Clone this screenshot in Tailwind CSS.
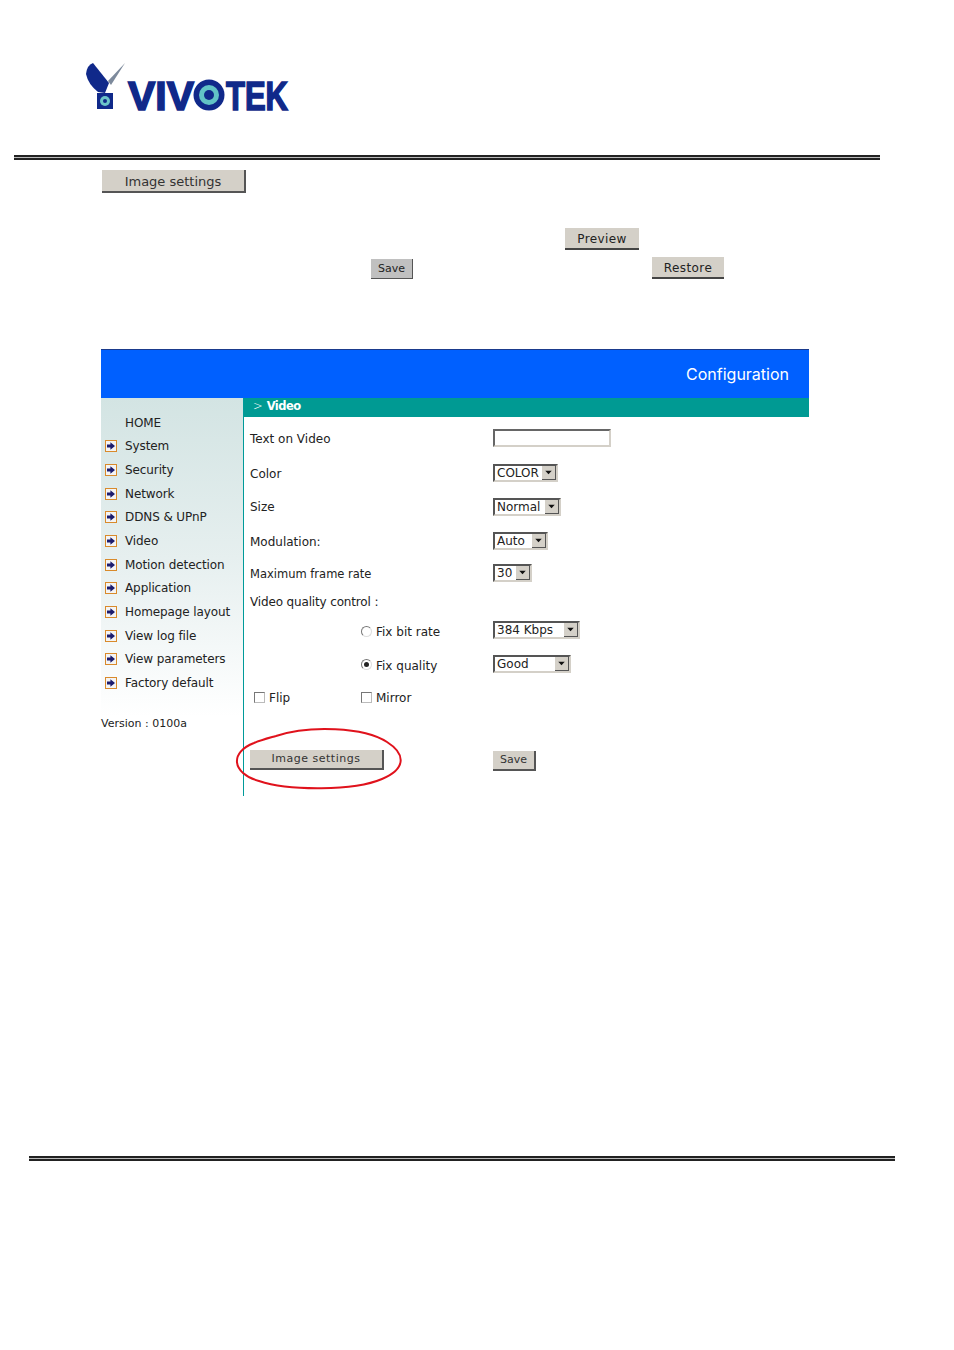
<!DOCTYPE html>
<html lang="en">
<head>
<meta charset="UTF-8">
<title>Image settings</title>
<script src="https://cdn.jsdelivr.net/npm/@tailwindcss/browser@4"></script>
</head>
<body class="bg-white w-[954px] h-[1350px] overflow-hidden font-['DejaVu_Sans',sans-serif] text-[12px] text-[#222]">

<!-- logo -->
<div class="h-[155px] pt-[62px] pl-[85px]">
  <svg width="230" height="62" viewBox="0 0 230 62">
    <path d="M1 12 Q2 3 8 1 L24 21 L20 31 L13 30 Q3 22 1 12Z" fill="#10298a"/>
    <path d="M23 19 L40 1 L26 23 Z" fill="#7d8a9c"/>
    <rect x="12" y="31" width="16" height="16" fill="#10298a"/>
    <circle cx="20" cy="39" r="5" fill="#6cc4c8"/>
    <circle cx="20" cy="39" r="2" fill="#10298a"/>
    <g font-family="Liberation Sans" font-weight="700" font-size="40" fill="#10298a" stroke="#10298a" stroke-width="1.6">
      <text x="43" y="47.5" textLength="66" lengthAdjust="spacingAndGlyphs">VIV</text>
      <text x="141" y="47.5" textLength="62" lengthAdjust="spacingAndGlyphs">TEK</text>
    </g>
    <circle cx="124" cy="33" r="15.5" fill="#10298a"/>
    <circle cx="124" cy="33" r="10" fill="#62c3c6"/>
    <circle cx="124" cy="33" r="5" fill="#10298a"/>
  </svg>
</div>

<!-- top rule -->
<div class="ml-[14px] w-[866px] h-[5px] border-y-2 border-[#222] bg-[#bbb]"></div>

<!-- buttons described in the manual text -->
<div class="pl-[102px] pt-[10px]">
  <button class="block w-[144px] h-[23px] pt-[2px] bg-[#d4d0c8] border-r-2 border-b-2 border-[#555] text-[13px] text-[#333]">Image settings</button>
</div>
<div class="pl-[565px] pt-[35px]">
  <button class="block w-[74px] h-[22px] pt-[2px] bg-[#d4d0c8] border-b-2 border-[#444] text-[12px] tracking-[.4px] text-[#222]">Preview</button>
</div>
<div class="flex items-end pl-[371px] pt-[7px] h-[29px]">
  <button class="w-[42px] h-[20px] pt-[2px] bg-[#c0c0c0] border-b border-r border-[#555] text-[11px] text-[#222]">Save</button>
  <button class="ml-[239px] w-[72px] h-[22px] pt-[2px] bg-[#d4d0c8] border-b-2 border-[#444] text-[12px] tracking-[.4px] text-[#222]">Restore</button>
</div>

<!-- configuration screenshot -->
<div class="relative ml-[101px] mt-[70px] w-[708px] h-[447px]">
  <div class="h-[49px] bg-[#0060ff] border-t border-[#1a3a8c] flex items-center justify-end pr-[20px] text-white font-['Inter',sans-serif] text-[16px]">Configuration</div>
  <div class="flex h-[398px]">
    <!-- side menu -->
    <div class="w-[142px] bg-linear-to-b from-[#d3e4e3] via-[#e6efef] via-40% to-white to-80% pt-[12.5px] text-[12px] tracking-[-.1px]">
      <div class="h-[24px] pl-[24px] flex items-center">HOME</div>
      <ul>
        <li class="h-[23.67px] flex items-center gap-[8px] pl-[4px]"><svg width="12" height="12" viewBox="0 0 12 12"><rect x=".5" y=".5" width="11" height="11" fill="#f4f4f4" stroke="#d98a2b"/><path d="M2 4.6h3.4V2.2L10 6l-4.6 3.8V7.4H2z" fill="#1c1c6e"/></svg>System</li>
        <li class="h-[23.67px] flex items-center gap-[8px] pl-[4px]"><svg width="12" height="12" viewBox="0 0 12 12"><rect x=".5" y=".5" width="11" height="11" fill="#f4f4f4" stroke="#d98a2b"/><path d="M2 4.6h3.4V2.2L10 6l-4.6 3.8V7.4H2z" fill="#1c1c6e"/></svg>Security</li>
        <li class="h-[23.67px] flex items-center gap-[8px] pl-[4px]"><svg width="12" height="12" viewBox="0 0 12 12"><rect x=".5" y=".5" width="11" height="11" fill="#f4f4f4" stroke="#d98a2b"/><path d="M2 4.6h3.4V2.2L10 6l-4.6 3.8V7.4H2z" fill="#1c1c6e"/></svg>Network</li>
        <li class="h-[23.67px] flex items-center gap-[8px] pl-[4px]"><svg width="12" height="12" viewBox="0 0 12 12"><rect x=".5" y=".5" width="11" height="11" fill="#f4f4f4" stroke="#d98a2b"/><path d="M2 4.6h3.4V2.2L10 6l-4.6 3.8V7.4H2z" fill="#1c1c6e"/></svg>DDNS &amp; UPnP</li>
        <li class="h-[23.67px] flex items-center gap-[8px] pl-[4px]"><svg width="12" height="12" viewBox="0 0 12 12"><rect x=".5" y=".5" width="11" height="11" fill="#f4f4f4" stroke="#d98a2b"/><path d="M2 4.6h3.4V2.2L10 6l-4.6 3.8V7.4H2z" fill="#1c1c6e"/></svg>Video</li>
        <li class="h-[23.67px] flex items-center gap-[8px] pl-[4px]"><svg width="12" height="12" viewBox="0 0 12 12"><rect x=".5" y=".5" width="11" height="11" fill="#f4f4f4" stroke="#d98a2b"/><path d="M2 4.6h3.4V2.2L10 6l-4.6 3.8V7.4H2z" fill="#1c1c6e"/></svg>Motion detection</li>
        <li class="h-[23.67px] flex items-center gap-[8px] pl-[4px]"><svg width="12" height="12" viewBox="0 0 12 12"><rect x=".5" y=".5" width="11" height="11" fill="#f4f4f4" stroke="#d98a2b"/><path d="M2 4.6h3.4V2.2L10 6l-4.6 3.8V7.4H2z" fill="#1c1c6e"/></svg>Application</li>
        <li class="h-[23.67px] flex items-center gap-[8px] pl-[4px]"><svg width="12" height="12" viewBox="0 0 12 12"><rect x=".5" y=".5" width="11" height="11" fill="#f4f4f4" stroke="#d98a2b"/><path d="M2 4.6h3.4V2.2L10 6l-4.6 3.8V7.4H2z" fill="#1c1c6e"/></svg>Homepage layout</li>
        <li class="h-[23.67px] flex items-center gap-[8px] pl-[4px]"><svg width="12" height="12" viewBox="0 0 12 12"><rect x=".5" y=".5" width="11" height="11" fill="#f4f4f4" stroke="#d98a2b"/><path d="M2 4.6h3.4V2.2L10 6l-4.6 3.8V7.4H2z" fill="#1c1c6e"/></svg>View log file</li>
        <li class="h-[23.67px] flex items-center gap-[8px] pl-[4px]"><svg width="12" height="12" viewBox="0 0 12 12"><rect x=".5" y=".5" width="11" height="11" fill="#f4f4f4" stroke="#d98a2b"/><path d="M2 4.6h3.4V2.2L10 6l-4.6 3.8V7.4H2z" fill="#1c1c6e"/></svg>View parameters</li>
        <li class="h-[23.67px] flex items-center gap-[8px] pl-[4px]"><svg width="12" height="12" viewBox="0 0 12 12"><rect x=".5" y=".5" width="11" height="11" fill="#f4f4f4" stroke="#d98a2b"/><path d="M2 4.6h3.4V2.2L10 6l-4.6 3.8V7.4H2z" fill="#1c1c6e"/></svg>Factory default</li>
      </ul>
      <div class="mt-[21.5px] text-[11px] tracking-[0]">Version : 0100a</div>
    </div>

    <!-- form -->
    <div class="flex-1 border-l border-[#009a9a]">
      <div class="h-[19px] bg-[#009a93] text-white text-[11.5px] pl-[9px] pb-[1px] flex items-center"><span class="mr-[4px] font-light">&gt;</span><b class="text-[11.5px] tracking-[-.5px]">Video</b></div>
      <div class="pt-[4px] pl-[6px]">
        <div class="h-[35px] flex items-center">
          <span class="w-[243px]">Text on Video</span>
          <span class="w-[118px] h-[18px] mb-[2px] border-2 border-b-[#d4d0c8] border-r-[#d4d0c8] border-t-[#666] border-l-[#666] bg-white"></span>
        </div>
        <div class="h-[34px] flex items-center">
          <span class="w-[243px] mt-[2px]">Color</span>
          <span class="w-[65px] h-[18px] flex items-center border-2 border-b-[#d4d0c8] border-r-[#d4d0c8] border-t-[#555] border-l-[#555] pl-[2px]">COLOR<svg class="ml-auto bg-[#d4d0c8] border-r border-b border-[#555]" width="14" height="14" viewBox="0 0 14 14"><path d="M3.5 5h7L7 9z" fill="#111"/></svg></span>
        </div>
        <div class="h-[34px] flex items-center">
          <span class="w-[243px]">Size</span>
          <span class="w-[68px] h-[18px] flex items-center border-2 border-b-[#d4d0c8] border-r-[#d4d0c8] border-t-[#555] border-l-[#555] pl-[2px]">Normal<svg class="ml-auto bg-[#d4d0c8] border-r border-b border-[#555]" width="14" height="14" viewBox="0 0 14 14"><path d="M3.5 5h7L7 9z" fill="#111"/></svg></span>
        </div>
        <div class="h-[33px] flex items-center">
          <span class="w-[243px] mt-[2px]">Modulation:</span>
          <span class="w-[55px] h-[18px] flex items-center border-2 border-b-[#d4d0c8] border-r-[#d4d0c8] border-t-[#555] border-l-[#555] pl-[2px]">Auto<svg class="ml-auto bg-[#d4d0c8] border-r border-b border-[#555]" width="14" height="14" viewBox="0 0 14 14"><path d="M3.5 5h7L7 9z" fill="#111"/></svg></span>
        </div>
        <div class="h-[32px] flex items-center">
          <span class="w-[243px] mt-[4px] text-[11.5px]">Maximum frame rate</span>
          <span class="w-[39px] h-[18px] flex items-center border-2 border-b-[#d4d0c8] border-r-[#d4d0c8] border-t-[#555] border-l-[#555] pl-[2px]">30<svg class="ml-auto bg-[#d4d0c8] border-r border-b border-[#555]" width="14" height="14" viewBox="0 0 14 14"><path d="M3.5 5h7L7 9z" fill="#111"/></svg></span>
        </div>
        <div class="h-[27px] flex items-center pb-[2px] tracking-[-.15px]">Video quality control :</div>
        <div class="h-[32px] flex items-center">
          <span class="w-[111px]"></span>
          <span class="w-[132px] flex items-center gap-[4px]"><span class="w-[11px] h-[11px] mb-[2px] rounded-full border border-t-[#777] border-l-[#777] border-b-[#ddd] border-r-[#ddd] bg-white"></span>Fix bit rate</span>
          <span class="w-[87px] h-[18px] mb-[4px] flex items-center border-2 border-b-[#d4d0c8] border-r-[#d4d0c8] border-t-[#555] border-l-[#555] pl-[2px]">384 Kbps<svg class="ml-auto bg-[#d4d0c8] border-r border-b border-[#555]" width="14" height="14" viewBox="0 0 14 14"><path d="M3.5 5h7L7 9z" fill="#111"/></svg></span>
        </div>
        <div class="h-[33px] flex items-center">
          <span class="w-[111px]"></span>
          <span class="w-[132px] mt-[2px] flex items-center gap-[4px]"><span class="w-[11px] h-[11px] mb-[2px] rounded-full border border-t-[#777] border-l-[#777] border-b-[#ddd] border-r-[#ddd] bg-white flex items-center justify-center"><span class="w-[5px] h-[5px] rounded-full bg-[#222]"></span></span>Fix quality</span>
          <span class="w-[78px] h-[18px] mb-[2px] flex items-center border-2 border-b-[#d4d0c8] border-r-[#d4d0c8] border-t-[#555] border-l-[#555] pl-[2px]">Good<svg class="ml-auto bg-[#d4d0c8] border-r border-b border-[#555]" width="14" height="14" viewBox="0 0 14 14"><path d="M3.5 5h7L7 9z" fill="#111"/></svg></span>
        </div>
        <div class="h-[32px] flex items-center">
          <span class="w-[111px] pl-[4px] mt-[1px] flex items-center gap-[4px]"><span class="w-[11px] h-[11px] border border-t-[#777] border-l-[#777] border-b-[#bbb] border-r-[#bbb] bg-white"></span>Flip</span>
          <span class="mt-[1px] flex items-center gap-[4px]"><span class="w-[11px] h-[11px] border border-t-[#777] border-l-[#777] border-b-[#bbb] border-r-[#bbb] bg-white"></span>Mirror</span>
        </div>
        <div class="h-[79px] pt-[37px] flex items-start">
          <button class="w-[134px] h-[20px] pt-[1px] bg-[#d4d0c8] border-r-2 border-b-2 border-[#555] text-[11px] tracking-[.5px] text-[#333]">Image settings</button>
          <button class="ml-[109px] mt-[1px] w-[43px] h-[20px] pt-[1px] bg-[#d4d0c8] border-r-2 border-b-2 border-[#555] text-[11px] text-[#333]">Save</button>
        </div>
      </div>
    </div>
  </div>

  <!-- red ring drawn over the button -->
  <svg class="absolute left-[133px] top-[377px]" width="172" height="66" viewBox="0 0 172 66" fill="none">
    <path d="M42 10 C75 -1 130 1 153 16 C172 28 172 43 148 53 C120 65 55 65 25 55 C-3 47 -4 26 20 17 C27 14 35 12 42 10Z" stroke="#e0121c" stroke-width="2"/>
  </svg>
</div>

<!-- bottom rule -->
<div class="ml-[29px] mt-[360px] w-[866px] h-[5px] border-y-2 border-[#222] bg-[#bbb]"></div>

</body>
</html>
